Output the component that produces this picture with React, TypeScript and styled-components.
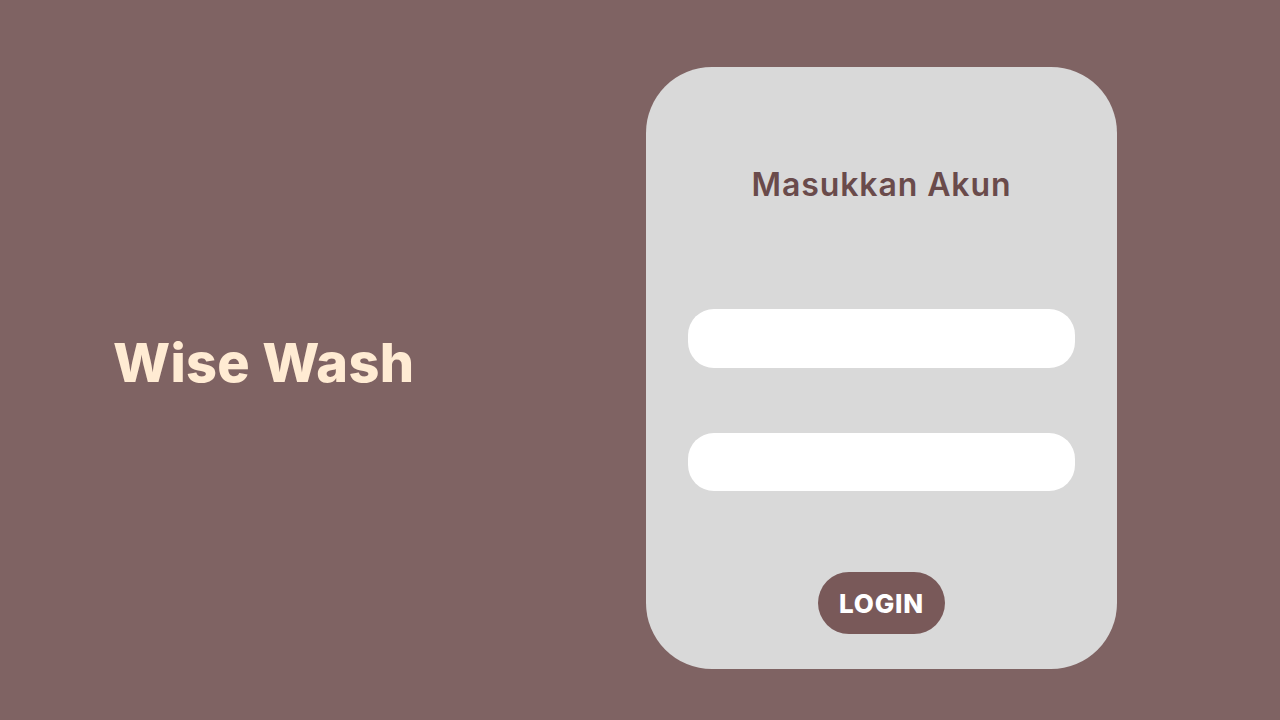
import React from "react";
import styled, { createGlobalStyle } from "styled-components";

const GlobalStyle = createGlobalStyle`
  html, body {
    margin: 0;
    padding: 0;
    background: #7f6363;
    font-family: "Inter", "DejaVu Sans", sans-serif;
  }
  * { box-sizing: border-box; }
`;

const Page = styled.div`
  display: grid;
  grid-template-columns: 646px 471px;
  align-items: center;
  height: 720px;
  padding: 67px 0 51px;
`;

const Brand = styled.h1`
  margin: 0 0 12px 113px;
  font-size: 54px;
  font-weight: 800;
  color: #ffebd3;
  letter-spacing: 0.3px;
`;

const Card = styled.form`
  display: flex;
  flex-direction: column;
  align-items: center;
  height: 602px;
  padding: 94px 42px 35px;
  background: #d9d9d9;
  border-radius: 66px;
`;

const Title = styled.h2`
  margin: 0 0 100px;
  height: 48px;
  line-height: 48px;
  font-size: 32px;
  font-weight: 600;
  letter-spacing: 0.9px;
  color: #6a4b4b;
`;

const Field = styled.input<{ $last?: boolean }>`
  width: 100%;
  height: 59px;
  border: none;
  outline: none;
  border-radius: 26px;
  background: #ffffff;
  padding: 0 24px;
  font-size: 18px;
  font-family: inherit;
  margin-bottom: ${(p) => (p.$last ? "81px" : "65px")};
`;

const Button = styled.button`
  width: 127px;
  height: 62px;
  border: none;
  border-radius: 31px;
  background: #795959;
  color: #ffffff;
  font-family: inherit;
  font-size: 26px;
  font-weight: 800;
  letter-spacing: 0.8px;
  padding: 0;
  cursor: pointer;
`;

const App: React.FC = () => {
  return (
    <>
      <GlobalStyle />
      <Page>
        <Brand>Wise Wash</Brand>
        <Card onSubmit={(e) => e.preventDefault()}>
          <Title>Masukkan Akun</Title>
          <Field type="text" />
          <Field type="password" $last />
          <Button type="submit">LOGIN</Button>
        </Card>
      </Page>
    </>
  );
};

export default App;
